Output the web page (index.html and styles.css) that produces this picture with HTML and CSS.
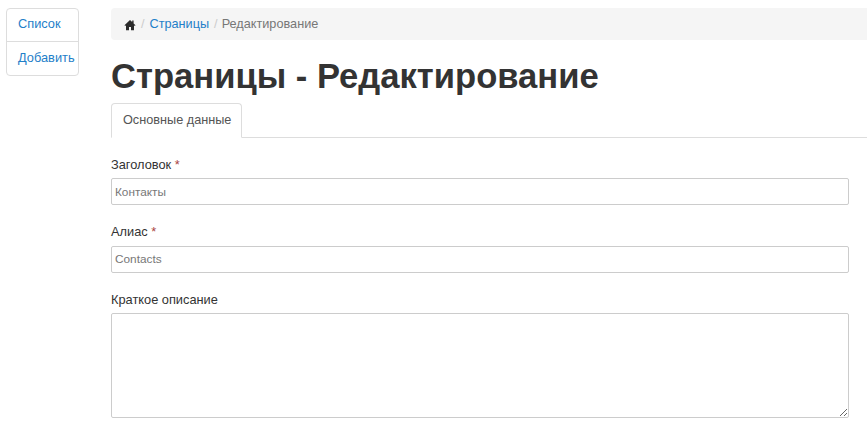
FILE: index.html
```html
<!DOCTYPE html>
<html lang="ru">
<head>
<meta charset="utf-8">
<title>Страницы - Редактирование</title>
<link rel="stylesheet" href="styles.css">
</head>
<body>
<nav class="side">
  <a class="side-item" href="#">Список</a>
  <a class="side-item" href="#">Добавить</a>
</nav>
<main class="main">
  <ol class="crumbs">
    <li class="crumb"><svg class="home" viewBox="0 0 12 12" width="12" height="12"><path d="M6 1 0.5 6.2 1.2 7 2 6.3V11.2H5V8H7V11.2H10V6.3L10.8 7 11.5 6.2 9.6 4.4V1.6H8.2V3.1Z" fill="#2b2b2b"/></svg></li>
    <li class="sep">/</li>
    <li class="crumb"><a href="#">Страницы</a></li>
    <li class="sep">/</li>
    <li class="crumb current">Редактирование</li>
  </ol>
  <h1 class="title">Страницы - Редактирование</h1>
  <div class="tabs"><a class="tab" href="#">Основные данные</a></div>
  <form class="form">
    <div class="group group-title">
      <label class="label">Заголовок <span class="req">*</span></label>
      <input class="control" type="text" placeholder="Контакты">
    </div>
    <div class="group group-alias">
      <label class="label">Алиас <span class="req">*</span></label>
      <input class="control" type="text" placeholder="Contacts">
    </div>
    <div class="group group-text">
      <label class="label">Краткое описание</label>
      <textarea class="control area"></textarea>
    </div>
  </form>
</main>
</body>
</html>
```
FILE: styles.css
```css
* { box-sizing: border-box; }
html, body { margin: 0; height: 433px; overflow: hidden; background: #fff; }
body {
  display: flex;
  align-items: flex-start;
  font-family: "Liberation Sans", Arial, sans-serif;
  font-size: 12.8px;
  line-height: 17px;
  color: #333;
}
a { color: #1f80c9; text-decoration: none; }
.side {
  flex: none;
  display: flex;
  flex-direction: column;
  width: 73px;
  height: 68px;
  margin: 8px 0 0 6px;
  border: 1px solid #ddd;
  border-radius: 4px;
}
.side-item {
  flex: none;
  display: block;
  height: 32px;
  padding: 6px 0 0 11px;
  font-size: 12.8px;
}
.side-item + .side-item { height: 34px; padding-top: 7px; border-top: 1px solid #ddd; }
.main { flex: 1; min-width: 0; margin: 8px 0 0 32px; }
.crumbs {
  display: flex;
  align-items: center;
  height: 32px;
  margin: 0;
  padding: 0 0 0 13px;
  list-style: none;
  background: #f5f5f5;
  border-radius: 4px 0 0 4px;
  font-size: 12.7px;
}
.home { display: block; margin-top: 1px; }
.sep { color: #ccc; margin: 0 4px 0 5px; }
.sep:nth-child(2) { margin-right: 5px; }
.current { color: #777; }
.title {
  margin: 17px 0 0;
  font-size: 34.6px;
  line-height: 39px;
  font-weight: 700;
  color: #333;
}
.tabs {
  display: flex;
  height: 35px;
  margin-top: 7px;
  border-bottom: 1px solid #ddd;
}
.tab {
  height: 35px;
  padding: 8px 10px 0 11px;
  background: #fff;
  border: 1px solid #ddd;
  border-bottom-color: #fff;
  border-radius: 4px 4px 0 0;
  color: #555;
  font-size: 12.7px;
}
.form { padding-top: 18px; }
.group { margin-bottom: 17px; }
.group-title { margin-bottom: 18px; }
.label { display: block; height: 17px; margin-bottom: 6px; font-size: 12.8px; color: #333; }
.group-title .label { margin-bottom: 5px; }
.group-text { margin-top: 18px; }
.group-text .label { margin-bottom: 5px; }
.req { color: #a94442; }
.control {
  display: block;
  width: 738px;
  height: 27px;
  padding: 3px;
  border: 1px solid #ccc;
  border-radius: 2px;
  background: #fff;
  font-family: "Liberation Sans", Arial, sans-serif;
  font-size: 11.8px;
  color: #555;
  outline: none;
}
.group-alias .control { padding-bottom: 5px; }
.control::placeholder { color: #777; opacity: 1; }
.area { height: 105px; }
```
